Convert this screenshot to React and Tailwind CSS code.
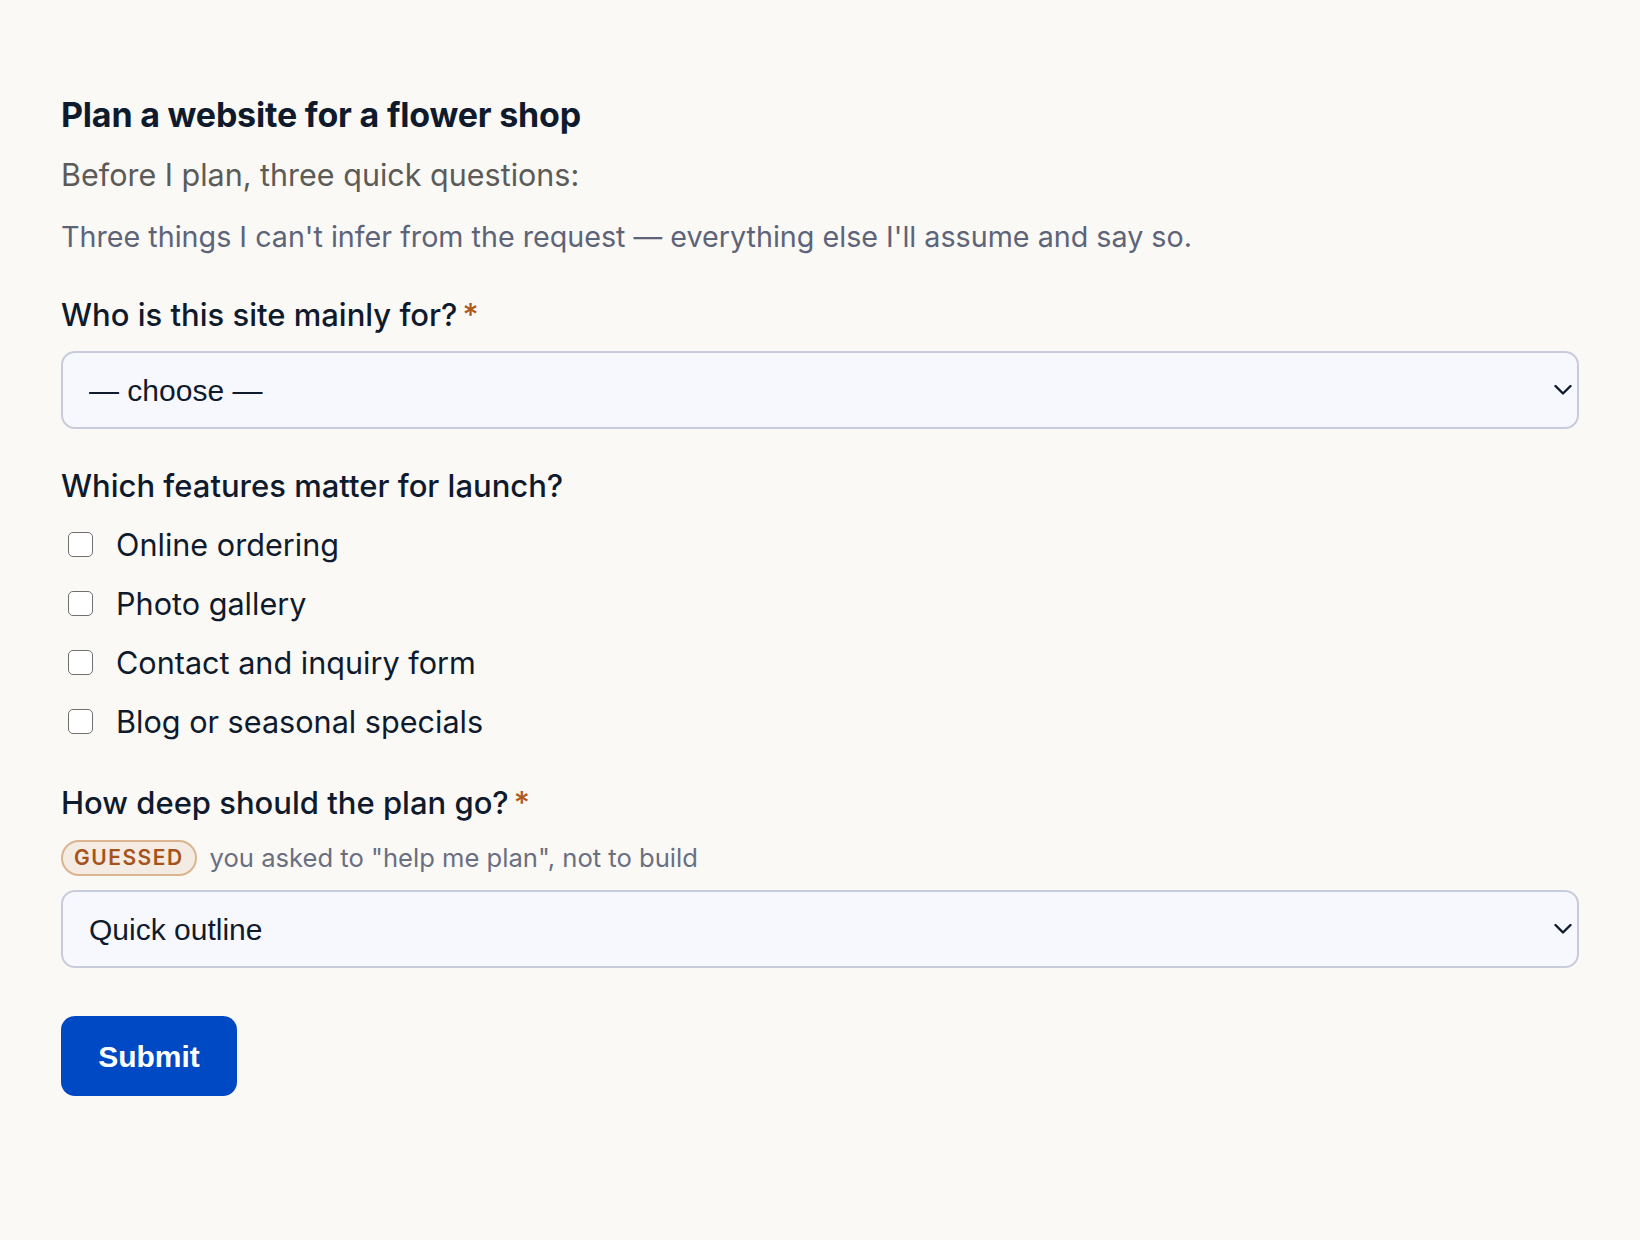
import React from "react";

const Chevron = () => (
  <svg
    className="pointer-events-none absolute right-[7px] top-1/2 -translate-y-1/2"
    width="18"
    height="11"
    viewBox="0 0 18 11"
    fill="none"
  >
    <path d="M1.5 1.5 L9 9 L16.5 1.5" stroke="#0f1b2d" strokeWidth="2.4" strokeLinecap="round" strokeLinejoin="round" />
  </svg>
);

function Select({ value, options }) {
  return (
    <div className="relative h-[78px] w-full">
      <select
        defaultValue={value}
        className="h-full w-full appearance-none rounded-[14px] border-[2px] border-[#c8cbdb] bg-[#f7f8fd] pl-[26px] pr-[40px] text-[30px] text-[#0f1b2d] outline-none [font-family:'Liberation_Sans',Arial,sans-serif]"
      >
        {options.map((o) => (
          <option key={o}>{o}</option>
        ))}
      </select>
      <Chevron />
    </div>
  );
}

function Check({ label }) {
  return (
    <label className="flex h-[59px] items-center gap-[23px] pl-[7px]">
      <input
        type="checkbox"
        className="h-[25px] w-[25px] appearance-none rounded-[5px] border-[1.5px] border-[#707070] bg-white"
      />
      <span className="text-[30.6px] text-[#0f1b2d]">{label}</span>
    </label>
  );
}

export default function App() {
  return (
    <div className="min-h-[1240px] w-full bg-[#faf9f6] px-[61px] [font-family:Inter,'Noto_Sans',sans-serif]">
      <h1 className="pt-[95px] text-[34px] font-bold leading-[40px] tracking-[-0.2px] text-[#0f1b2d]">
        Plan a website for a flower shop
      </h1>
      <p className="mt-[20px] text-[30.5px] leading-[40px] text-[#5c5b57]">
        Before I plan, three quick questions:
      </p>
      <p className="mt-[22px] text-[28.7px] leading-[40px] text-[#5e6478]">
        Three things I can't infer from the request — everything else I'll assume and say so.
      </p>

      <div className="mt-[38px] text-[31px] font-medium leading-[40px] text-[#0f1b2d]">
        Who is this site mainly for?<span className="ml-[5px] text-[#b0581a]">*</span>
      </div>
      <div className="mt-[16px]">
        <Select value="— choose —" options={["— choose —", "Local walk-in customers", "Online shoppers", "Event and wedding clients"]} />
      </div>

      <div className="mt-[37px] text-[31px] font-medium leading-[40px] text-[#0f1b2d]">
        Which features matter for launch?
      </div>
      <div className="mt-[9px] flex flex-col">
        <Check label="Online ordering" />
        <Check label="Photo gallery" />
        <Check label="Contact and inquiry form" />
        <Check label="Blog or seasonal specials" />
      </div>

      <div className="mt-[32px] text-[31px] font-medium leading-[40px] text-[#0f1b2d]">
        How deep should the plan go?<span className="ml-[5px] text-[#b0581a]">*</span>
      </div>
      <div className="mt-[16px] flex items-center gap-[13px]">
        <span className="flex h-[36px] items-center rounded-full border-[2px] border-[#dab590] bg-[#f4ebe2] px-[11px] text-[21px] font-semibold tracking-[1.5px] text-[#a5531c]">
          GUESSED
        </span>
        <span className="text-[25.6px] text-[#6a6f80]">you asked to "help me plan", not to build</span>
      </div>
      <div className="mt-[13px]">
        <Select value="Quick outline" options={["Quick outline", "Detailed plan", "Full specification"]} />
      </div>

      <button className="mt-[48px] h-[80px] w-[176px] rounded-[14px] bg-[#0049c4] text-[30px] font-bold text-white [font-family:'Liberation_Sans',Arial,sans-serif]">
        Submit
      </button>
    </div>
  );
}
